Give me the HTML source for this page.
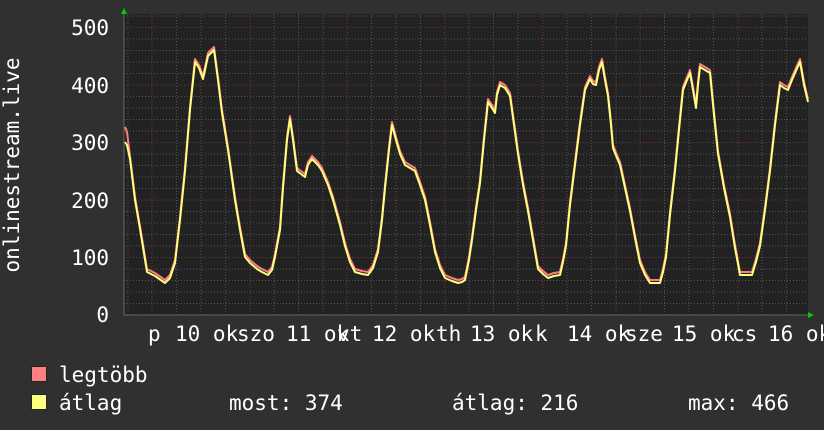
<!DOCTYPE html>
<html><head><meta charset="utf-8"><style>
html,body{margin:0;padding:0;background:#303030;}
svg{display:block}
text{font-family:"DejaVu Sans Mono","Liberation Mono",monospace;fill:#fff}
</style></head><body>
<svg width="824" height="430" xmlns="http://www.w3.org/2000/svg">
<rect width="824" height="430" fill="#303030"/>
<rect x="124" y="14" width="684" height="301" fill="#222"/>
<g stroke="#555" stroke-width="1" stroke-dasharray="1,2">
<path d="M124 303.5H808M124 292H808M124 280.5H808M124 269H808M124 246H808M124 234.5H808M124 223H808M124 211.5H808M124 188.5H808M124 177H808M124 165.5H808M124 154H808M124 131H808M124 119.5H808M124 108H808M124 96.5H808M124 73.5H808M124 62H808M124 50.5H808M124 39H808M124 16H808"/>
<path d="M176.5 14V315M201 14V315M225.5 14V315M274 14V315M298.5 14V315M323 14V315M371.5 14V315M396 14V315M420.5 14V315M469 14V315M493.5 14V315M518 14V315M567 14V315M591.5 14V315M616 14V315M664.5 14V315M689 14V315M713.5 14V315M762 14V315M786.5 14V315M128 14V315"/>
</g>
<g stroke="#7a3535" stroke-width="1" stroke-dasharray="1,2">
<path d="M124 257.5H808M124 200H808M124 142.5H808M124 85H808M124 27.5H808"/>
<path d="M152 14V315M250 14V315M347 14V315M445 14V315M543 14V315M640 14V315M738 14V315"/>
</g>
<path d="M124 315H810M124 10V315" stroke="#666" stroke-width="1"/>
<path d="M121 14L124 8L127 14Z M808 312L814 315L808 318Z" fill="#0c0"/>
<g fill="none" stroke-width="2" stroke-linejoin="round">
<polyline stroke="#ff7f7f" transform="translate(0,-3)" points="125,130 127,135 130,159 135,200 140,229 147,272 155,276 165,283 170,278 175,263 180,220 185,171 190,110 195,62 199,68 203,79 205,70 208,56 214,50 218,80 222,113 228,150 235,200 240,230 245,257 250,263 257,269 262,272 268,275 272,270 275,257 280,230 283,188 287,140 290,119 293,140 297,171 305,177 308,165 312,159 318,165 322,171 328,185 333,200 340,225 345,246 350,262 355,272 362,274 368,275 373,268 378,252 382,220 385,188 389,150 392,125 396,140 400,154 405,165 410,168 415,171 420,185 425,200 430,225 435,252 440,268 445,278 452,281 458,283 462,282 465,280 469,260 472,240 476,210 480,183 484,140 488,102 492,108 495,113 497,95 500,85 505,88 510,96 514,125 518,154 523,185 528,211 533,240 538,269 543,274 548,278 554,276 560,275 563,262 566,246 570,205 575,165 580,125 585,90 590,79 593,84 596,85 599,70 602,62 605,80 608,96 611,125 613,148 617,158 620,165 625,188 630,211 635,238 640,263 645,275 650,283 655,283 660,283 663,272 666,257 670,215 675,171 679,130 683,90 687,80 690,73 693,90 696,108 698,85 700,67 705,70 710,73 714,115 718,154 724,188 730,217 735,248 740,275 746,275 752,275 756,262 760,246 765,210 770,171 775,125 780,85 784,88 788,90 792,80 795,73 800,62 804,85 808,102"/>
<polyline stroke="#ffff7f" points="125,142 127,145 130,159 135,200 140,229 147,272 155,276 165,283 170,278 175,263 180,220 185,171 190,110 195,62 199,68 203,79 205,70 208,56 214,50 218,80 222,113 228,150 235,200 240,230 245,257 250,263 257,269 262,272 268,275 272,270 275,257 280,230 283,188 287,140 290,119 293,140 297,171 305,177 308,165 312,159 318,165 322,171 328,185 333,200 340,225 345,246 350,262 355,272 362,274 368,275 373,268 378,252 382,220 385,188 389,150 392,125 396,140 400,154 405,165 410,168 415,171 420,185 425,200 430,225 435,252 440,268 445,278 452,281 458,283 462,282 465,280 469,260 472,240 476,210 480,183 484,140 488,102 492,108 495,113 497,95 500,85 505,88 510,96 514,125 518,154 523,185 528,211 533,240 538,269 543,274 548,278 554,276 560,275 563,262 566,246 570,205 575,165 580,125 585,90 590,79 593,84 596,85 599,70 602,62 605,80 608,96 611,125 613,148 617,158 620,165 625,188 630,211 635,238 640,263 645,275 650,283 655,283 660,283 663,272 666,257 670,215 675,171 679,130 683,90 687,80 690,73 693,90 696,108 698,85 700,67 705,70 710,73 714,115 718,154 724,188 730,217 735,248 740,275 746,275 752,275 756,262 760,246 765,210 770,171 775,125 780,85 784,88 788,90 792,80 795,73 800,62 804,85 808,102"/>
</g>
<g font-size="21" text-anchor="end">
<text x="109" y="35">500</text>
<text x="109" y="93">400</text>
<text x="109" y="150">300</text>
<text x="109" y="208">200</text>
<text x="109" y="265">100</text>
<text x="109" y="322">0</text>
</g>
<text font-size="21" transform="translate(19,165) rotate(-90)" text-anchor="middle">onlinestream.live</text>
<g font-size="21">
<text x="148" y="341">p</text><text x="175" y="341">10 ok</text><text x="237" y="341">szo</text>
<text x="286" y="341">11 ok</text><text x="337" y="341">vt</text>
<text x="372" y="341">12 ok</text><text x="436" y="341">th</text>
<text x="470" y="341">13 ok</text><text x="535" y="341">k</text>
<text x="567" y="341">14 ok</text><text x="625" y="341">sze</text>
<text x="672" y="341">15 ok</text><text x="732" y="341">cs</text>
<text x="768" y="341">16 ok</text>
</g>
<rect x="31.5" y="366.5" width="15" height="15" fill="#ff7f7f" stroke="#222"/>
<rect x="31.5" y="394.5" width="15" height="15" fill="#ffff7f" stroke="#222"/>
<g font-size="21">
<text x="59" y="382">legtöbb</text>
<text x="59" y="410">átlag</text>
<text x="229" y="410">most: 374</text>
<text x="452" y="410">átlag: 216</text>
<text x="688" y="410">max: 466</text>
</g>
</svg>
</body></html>
